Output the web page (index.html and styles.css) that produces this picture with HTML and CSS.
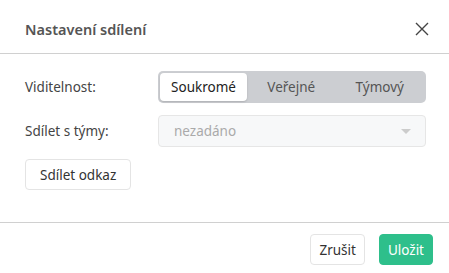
FILE: index.html
```html
<!DOCTYPE html>
<html lang="cs">
<head>
    <meta charset="UTF-8">
    <title>Nastavení sdílení</title>
    <link rel="stylesheet" href="styles.css">
</head>
<body>
    <div class="modal">
        <div class="modal-header">
            <h2>Nastavení sdílení</h2>
            <button class="close-button" type="button">
                <svg width="14" height="14" viewBox="0 0 14 14">
                    <path d="M1 1 L13 13 M13 1 L1 13" stroke="#444" stroke-width="1.4" fill="none"/>
                </svg>
            </button>
        </div>

        <div class="modal-body">
            <div class="form-row">
                <label>Viditelnost:</label>
                <div class="segmented">
                    <button class="segment active" type="button">Soukromé</button>
                    <button class="segment" type="button">Veřejné</button>
                    <button class="segment" type="button">Týmový</button>
                </div>
            </div>
            <div class="form-row">
                <label>Sdílet s týmy:</label>
                <div class="select disabled">
                    <span>nezadáno</span>
                    <span class="caret"></span>
                </div>
            </div>
            <button class="btn btn-wide" type="button">Sdílet odkaz</button>
        </div>

        <div class="modal-footer">
            <button class="btn" type="button">Zrušit</button>
            <button class="btn btn-primary" type="button">Uložit</button>
        </div>
    </div>
</body>
</html>
```

FILE: styles.css
```css
body {
    margin: 0;
    font-family: "Noto Sans", sans-serif;
    font-size: 13.5px;
    color: #333;
    background-color: #fff;
}

.modal {
    width: 449px;
    height: 273px;
    background-color: #fff;
}

.modal-header {
    display: flex;
    align-items: center;
    justify-content: space-between;
    height: 49px;
    padding: 4px 20px 0 25px;
    border-bottom: 1px solid #d0d0d0;
}

.modal-header h2 {
    margin: 0;
    font-size: 14.5px;
    font-weight: 600;
    color: #555;
}

.close-button {
    display: flex;
    background: none;
    border: none;
    padding: 0;
    cursor: pointer;
}

.modal-body {
    padding: 17px 23px 32px 25px;
    border-bottom: 1px solid #d0d0d0;
}

.form-row {
    display: flex;
    align-items: center;
    margin-bottom: 12px;
}

.form-row label {
    width: 133px;
    color: #444;
}

.segmented {
    flex: 1;
    display: flex;
    padding: 2px;
    background-color: #ccced2;
    border-radius: 5px;
}

.segment {
    flex: 1;
    height: 28px;
    border: none;
    background: none;
    font-family: inherit;
    font-size: 13.5px;
    color: #555;
    border-radius: 4px;
}

.segment.active {
    flex: 0 0 87px;
    background-color: #fff;
    color: #222;
    box-shadow: 0 1px 2px rgba(0, 0, 0, 0.15);
}

.select {
    flex: 1;
    display: flex;
    align-items: center;
    justify-content: space-between;
    height: 30px;
    padding: 0 14px 0 15px;
    border: 1px solid #e6e6e6;
    border-radius: 4px;
    background-color: #f7f8f9;
    color: #aaa;
}

.caret {
    width: 0;
    height: 0;
    border-left: 5px solid transparent;
    border-right: 5px solid transparent;
    border-top: 5px solid #ccc;
}

.btn {
    height: 31px;
    padding: 0 8px;
    border: 1px solid #e4e4e4;
    border-radius: 4px;
    background-color: #fff;
    font-family: inherit;
    font-size: 13.5px;
    color: #333;
    cursor: pointer;
}

.btn-wide {
    padding: 0 14px;
}

.modal-footer {
    display: flex;
    justify-content: flex-end;
    gap: 14px;
    padding: 11px 16px 0 0;
}

.btn-primary {
    background-color: #2ebf8b;
    border-color: #2ebf8b;
    color: #fff;
}
```
